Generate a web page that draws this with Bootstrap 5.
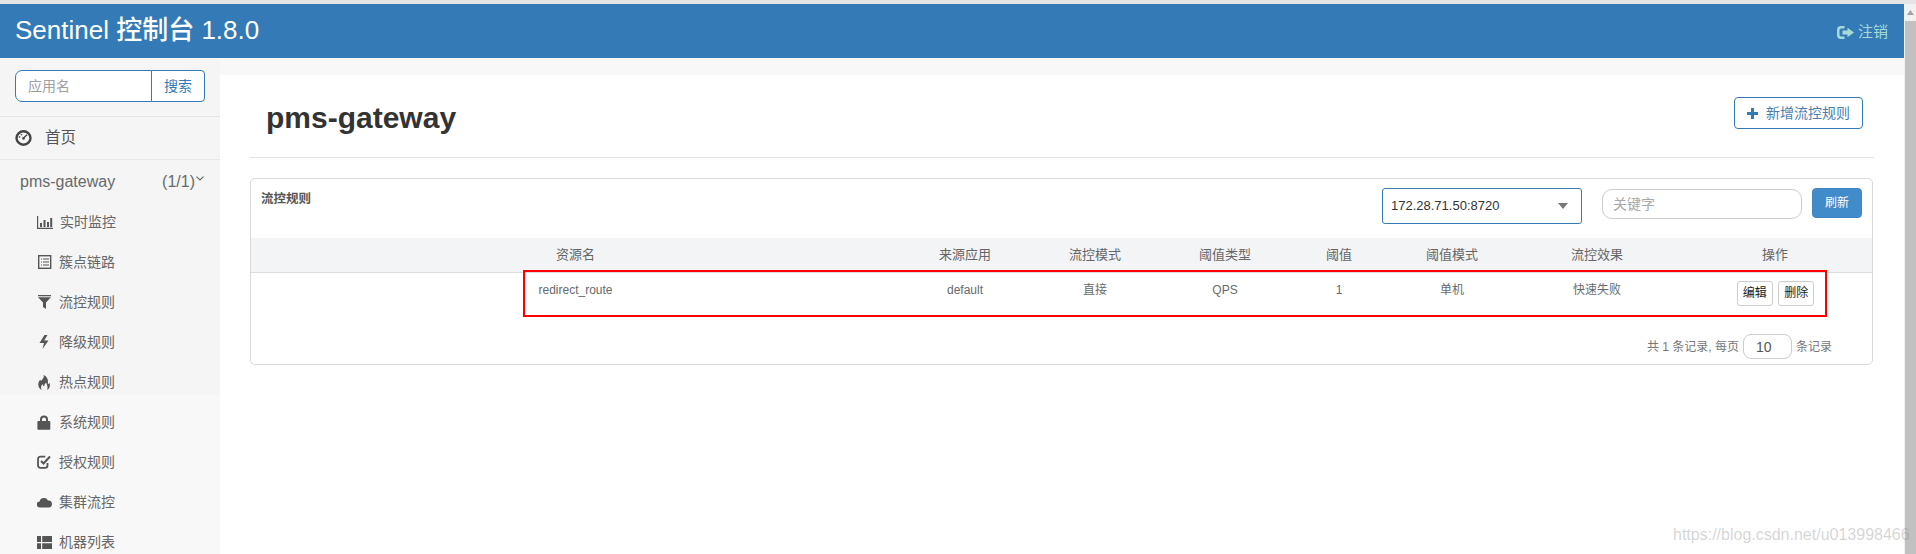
<!DOCTYPE html>
<html lang="zh">
<head>
<meta charset="utf-8">
<title>Sentinel 控制台</title>
<link href="https://cdn.jsdelivr.net/npm/bootstrap@5.3.0/dist/css/bootstrap.min.css" rel="stylesheet">
<style>
html,body{height:100%;overflow:hidden}
body{font-family:"Liberation Sans","Noto Sans CJK SC",sans-serif;font-size:13px;color:#676a6c;background:#fff;position:relative}
.topedge{height:4px;background:#e4e4e4}
.shell{height:550px}
.appcol{width:1904px;flex:none}
.scrolltrack{width:12px;flex:none;background:#f1f1f1}
.scrollcap{height:17px;color:#a3a3a3}
.scrollthumb{background:#c1c1c1;margin-left:1px}
.topbar{height:54px;flex:none;background:#337ab7;padding:0 16px 0 15px}
.brandname{font-size:26px;color:#fff;line-height:50px;padding:0 0 2px;margin:0}
.signout{color:#a6dad4;font-size:15px;text-decoration:none;padding-top:3px}
.bodyrow{min-height:0;overflow:hidden}
.leftside{width:220px;flex:none;background:#f8f8f8}
.sidehead{background:#f5f5f5;height:337px;margin-bottom:7px}
.searchrow{padding:12px 15px 15px;height:59px;border-bottom:1px solid #e7e7e7}
.searchrow .form-control{height:32px;font-size:14px;border-color:#337ab7;border-radius:7px 0 0 7px;padding:0 12px;box-shadow:none}
.searchrow .form-control::placeholder{color:#a0a0a0}
.searchrow .btn{width:54px;height:32px;font-size:14px;color:#337ab7;border-color:#337ab7;padding:0;border-radius:0 4px 4px 0;background:#fff}
.homelink{height:43px;padding-left:15px;border-bottom:1px solid #e7e7e7;color:#555;font-size:15.5px;text-decoration:none}
.homelink svg{margin-right:13px}
.appline{height:42px;padding:2px 16px 0 20px;font-size:16px;color:#676a6c}
.appline .countmark{margin-left:auto;margin-right:1px}
.subitem{height:40px;padding-left:37px;color:#666;font-size:14px;text-decoration:none;flex:none}
.subitem svg{margin-right:7px;color:#555;flex:none}
.mainarea{background:#f8f8f8;padding-top:17px;min-width:0}
.sheet{background:#fff;height:100%;padding:0 30px}
.headrow{height:83px;border-bottom:1px solid #e4e4e4;padding:22px 11px 0 16px}
.pagetitle{font-size:30px;font-weight:700;color:#333;margin:0;line-height:42px}
.addbtn{height:32px;width:129px;font-size:14px;color:#4a7fb0;border-color:#337ab7;padding:0;border-radius:4px;background:#fff}
.addbtn svg{margin-right:8px}
.rulecard{margin-top:20px;width:1623px;border:1px solid #d9d9d9;border-radius:5px;height:187px}
.toolrow{height:60px;padding:9px 10px 0 10px}
.cardname{font-size:12.5px;color:#555;font-weight:700;line-height:20px;margin-top:1px}
.hostpick{width:200px;height:36px;font-size:13px;color:#333;border:1px solid #337ab7;border-radius:3px;padding:0 0 0 8px;margin-right:20px;background-position:right 13px center;background-image:url("data:image/svg+xml,%3csvg xmlns='http://www.w3.org/2000/svg' viewBox='0 0 12 7'%3e%3cpath fill='%23777' d='M0 0h12L6 7z'/%3e%3c/svg%3e");background-size:10px 6px;box-shadow:none}
.keyfield{width:200px;height:30px;font-size:14px;border:1px solid #ccc;border-radius:10px;padding:0 10px;margin:1px 10px 0 0;box-shadow:none}
.keyfield::placeholder{color:#a8a8a8}
.refreshbtn{width:50px;height:30px;font-size:12px;background:#428bca;border:1px solid #3f85c2;color:#fff;padding:0;border-radius:4px}
.ruletable{table-layout:fixed;width:1621px;margin:0;font-size:12px;--bs-table-color:#676a6c;--bs-table-bg:transparent}
.ruletable th{height:34px;background:#f3f4f6;font-weight:400;font-size:13px;text-align:center;padding:0;vertical-align:middle;border-bottom:1px solid #ddd;color:#666}
.ruletable td{height:44px;text-align:center;padding:8px 0 0;vertical-align:top;border:0;line-height:18px;color:#676a6c}
.cola{width:649px}.colb,.colc,.cold{width:130px}.cole{width:98px}.colf{width:128px}.colg{width:162px}.colh{width:194px}
.rowbtn{width:36px;height:25px;padding:0;font-size:12px;color:#222;background:#fff;border:1px solid #ccc;border-radius:3px;margin:0 2px 0 0}
.actions{padding-left:3px!important}
.pagerrow{padding:13px 40px 0 0;font-size:12px;color:#777;height:48px}
.sizefield{width:49px;height:25px;font-size:14px;border:1px solid #ccc;border-radius:8px;padding:0 12px;margin:0 4px;color:#555;box-shadow:none}
.redmark{position:absolute;left:272px;top:91px;width:1304px;height:47px;border:2px solid #f00;pointer-events:none}
.stamp{position:absolute;left:1673px;top:525px;font-size:16px;line-height:20px;color:rgba(130,130,130,.34);white-space:nowrap}
</style>
</head>
<body>
<div class="topedge"></div>
<div class="d-flex shell">
  <div class="appcol d-flex flex-column">
    <nav class="navbar topbar flex-nowrap justify-content-between">
      <h1 class="brandname">Sentinel 控制台 1.8.0</h1>
      <a class="signout d-flex align-items-center" href="#">
        <svg width="17" height="13" viewBox="0 0 17 13" class="me-1" fill="currentColor"><path d="M7.500 0H4a4 4 0 0 0-4 4v5a4 4 0 0 0 4 4h3.500v-2.500H4.200A1.700 1.700 0 0 1 2.500 8.800V4.200A1.700 1.700 0 0 1 4.200 2.500h3.300z"/><path d="M10.500 1.800 17 6.500l-6.500 4.700V8.600H5.500V4.400h5z"/></svg>注销</a>
    </nav>
    <div class="d-flex flex-grow-1 bodyrow">
      <aside class="leftside">
        <div class="sidehead">
          <form class="searchrow">
            <div class="input-group">
              <input class="form-control" type="text" placeholder="应用名">
              <button class="btn" type="button">搜索</button>
            </div>
          </form>
          <a class="homelink d-flex align-items-center" href="#">
            <svg width="17" height="16" viewBox="0 0 17 16"><ellipse cx="8.500" cy="8" rx="7" ry="6.700" fill="#f5f5f5" stroke="#444" stroke-width="2.400"/><path d="M8.500 8 12 4.800" stroke="#444" stroke-width="1.400"/><circle cx="4.500" cy="7" r=".9" fill="#666"/><circle cx="6.500" cy="4.600" r=".9" fill="#666"/><circle cx="8.500" cy="8.400" r="1.300" fill="#444"/></svg>首页</a>
          <div class="appline d-flex align-items-center">
            <span>pms-gateway</span><span class="countmark">(1/1)</span>
            <svg class="mb-2" width="8" height="5" viewBox="0 0 8 5"><path d="M.5.7 4 4 7.500.7" fill="none" stroke="#666" stroke-width="1.100"/></svg>
          </div>
          <a class="subitem d-flex align-items-center" href="#">
            <svg width="16" height="14" viewBox="0 0 16 14" fill="currentColor"><path d="M0 1h1.200v11.800H16V14H0z"/><path d="M3 8h2v4H3zM6.500 5h2v7h-2zM10 7h2v5h-2zM13.200 3h2v9h-2z"/></svg>实时监控</a>
          <a class="subitem d-flex align-items-center" href="#">
            <svg width="15" height="14" viewBox="0 0 15 14" fill="none" stroke="currentColor"><rect x="1.700" y=".7" width="12" height="12.600" stroke-width="1.400"/><path d="M4 4h1M6 4h6M4 7h1M6 7h6M4 10h1M6 10h6" stroke-width="1.200"/></svg>簇点链路</a>
          <a class="subitem d-flex align-items-center" href="#">
            <svg width="15" height="14" viewBox="0 0 15 14" fill="currentColor"><path d="M1 0h13v1.200H1zM1 2.200h13L9 7.500V14L6 12V7.500z"/></svg>流控规则</a>
          <a class="subitem d-flex align-items-center" href="#">
            <svg width="15" height="14" viewBox="0 0 15 14" fill="currentColor"><path d="M7.500 0 2.500 8H7l-1.500 6 6-8.500H7.200L10.500 0z"/></svg>降级规则</a>
          <a class="subitem d-flex align-items-center" href="#">
            <svg width="15" height="15" viewBox="0 0 15 15" fill="currentColor"><path d="M6.500 0c1 2.500-1 4-2 5.500C3.700 6.200 3.500 5.500 3.500 4.500 1.500 6.500.5 9 1.800 12c.6 1.300 1.700 2.400 3 3-1-1.700-1.200-3.500.7-6 .2 1.200 1 1.800 1.700 2.300.2-1.700.9-3 2-3.800.4 2.500 2 3.300 1 7.500 2.600-1.400 3.300-4.500 2.300-7.300-.4.900-1 1.300-1.600 1.300C11.500 4 9.800 1.500 6.500 0z"/></svg>热点规则</a>
        </div>
        <a class="subitem d-flex align-items-center" href="#">
            <svg width="15" height="15" viewBox="0 0 15 15" fill="currentColor"><path fill-rule="evenodd" d="M3 6V4.500a4 4 0 0 1 8 0V6h1.500c.5 0 .8.300.8.800V14c0 .5-.3.800-.8.800H1.200c-.5 0-.8-.3-.8-.8V6.800c0-.5.300-.8.800-.8zM5 6h4V4.500a2 2 0 0 0-4 0z"/></svg>系统规则</a>
        <a class="subitem d-flex align-items-center" href="#">
            <svg width="15" height="14" viewBox="0 0 15 14" fill="none" stroke="currentColor"><path d="M10.500 8v2.500a2.300 2.300 0 0 1-2.300 2.300H3.300A2.300 2.300 0 0 1 1 10.500V4A2.300 2.300 0 0 1 3.300 1.700h5" stroke-width="1.800"/><path d="m4 6 2.500 2.500L13 1.500" stroke-width="2"/></svg>授权规则</a>
        <a class="subitem d-flex align-items-center" href="#">
            <svg width="15" height="11" viewBox="0 0 15 11" fill="currentColor"><path d="M3 10.500a3 3 0 0 1-.4-6A4.500 4.500 0 0 1 11 3.500a3.500 3.500 0 0 1 .8 7z"/></svg>集群流控</a>
        <a class="subitem d-flex align-items-center" href="#">
            <svg width="15" height="13" viewBox="0 0 15 13" fill="currentColor"><path d="M0 0h4v6H0zM5.200 0H15v6H5.200zM0 7.200h4V13H0zM5.200 7.200H15V13H5.200z"/></svg>机器列表</a>
      </aside>
      <main class="mainarea flex-grow-1">
        <div class="sheet">
          <div class="headrow d-flex justify-content-between align-items-start">
            <h2 class="pagetitle">pms-gateway</h2>
            <button class="btn addbtn d-flex align-items-center justify-content-center" type="button">
              <svg width="11" height="11" viewBox="0 0 11 11" fill="#337ab7"><path d="M4 0h3v4h4v3H7v4H4V7H0V4h4z"/></svg>新增流控规则</button>
          </div>
          <div class="card rulecard">
            <div class="toolrow d-flex align-items-start">
              <div class="cardname me-auto">流控规则</div>
              <select class="form-select hostpick"><option>172.28.71.50:8720</option></select>
              <input class="form-control keyfield" type="text" placeholder="关键字">
              <button class="btn refreshbtn" type="button">刷新</button>
            </div>
            <table class="table ruletable">
              <thead>
                <tr>
                  <th class="cola">资源名</th><th class="colb">来源应用</th><th class="colc">流控模式</th><th class="cold">阈值类型</th><th class="cole">阈值</th><th class="colf">阈值模式</th><th class="colg">流控效果</th><th class="colh">操作</th>
                </tr>
              </thead>
              <tbody>
                <tr>
                  <td>redirect_route</td><td>default</td><td>直接</td><td>QPS</td><td>1</td><td>单机</td><td>快速失败</td>
                  <td class="actions"><button class="btn rowbtn" type="button">编辑</button> <button class="btn rowbtn" type="button">删除</button></td>
                </tr>
              </tbody>
            </table>
            <div class="pagerrow d-flex justify-content-end align-items-center">
              <span>共 1 条记录, 每页</span><input class="form-control sizefield" type="text" value="10"><span>条记录</span>
            </div>
            <div class="redmark"></div>
          </div>
        </div>
      </main>
    </div>
  </div>
  <div class="scrolltrack d-flex flex-column">
    <div class="scrollcap d-flex justify-content-center align-items-center">
      <svg width="7" height="5" viewBox="0 0 7 5" fill="currentColor"><path d="M3.500 0 7 5H0z"/></svg>
    </div>
    <div class="scrollthumb flex-grow-1"></div>
  </div>
</div>
<div class="stamp">https://blog.csdn.net/u013998466</div>
<script src="https://cdn.jsdelivr.net/npm/bootstrap@5.3.0/dist/js/bootstrap.bundle.min.js"></script>
</body>
</html>
